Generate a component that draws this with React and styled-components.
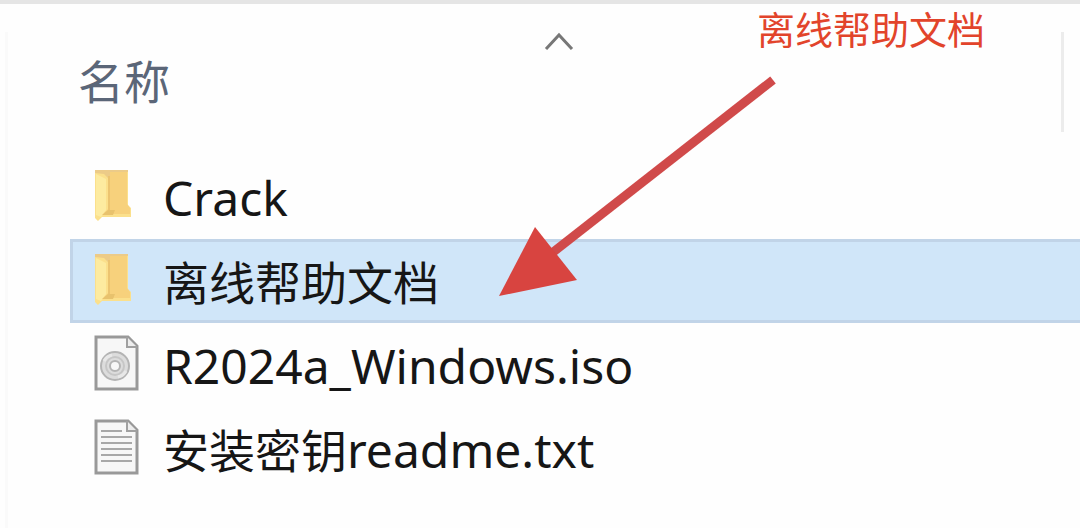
import React, { useState } from "react";
import styled, { createGlobalStyle } from "styled-components";

const GlobalStyle = createGlobalStyle`
  * {
    box-sizing: border-box;
  }
  body {
    margin: 0;
    background: #fefefe;
    font-family: "Noto Sans", "Noto Sans CJK SC", sans-serif;
  }
`;

const Window = styled.main`
  position: relative;
  min-height: 100vh;
  padding-top: 28px;
  border-top: 4px solid #e5e5e5;
  overflow: hidden;
`;

const Pane = styled.section`
  margin-left: 5px;
  min-height: calc(100vh - 32px);
  border-left: 3px solid #fafafa;
`;

const ColumnHeader = styled.div`
  display: flex;
  height: 100px;
  margin: 0 16px 0 48px;
  border-right: 3px solid #ececec;
`;

const SortButton = styled.button`
  flex: 1;
  display: flex;
  flex-direction: column;
  align-items: flex-start;
  padding: 0 0 0 22px;
  border: 0;
  background: none;
  color: #5b6678;
  font: inherit;
  font-size: 46px;
  line-height: 62px;
`;

const SortArrow = styled.svg`
  align-self: center;
  width: 30px;
  height: 18px;
  margin-right: 22px;
`;

const FileList = styled.ul`
  margin: 23px 0 0 62px;
  padding: 0;
  list-style: none;
`;

const FileRow = styled.button`
  display: flex;
  align-items: center;
  gap: 24px;
  width: 100%;
  height: 84px;
  padding: 0 20px 2px;
  border: 3px solid ${props => (props.$selected ? "#c1d4e8" : "transparent")};
  border-right: 0;
  background: ${props => (props.$selected ? "#d0e6f9" : "none")};
  color: #161616;
  font: inherit;
  font-size: 46px;
  line-height: 64px;
  text-align: left;
  white-space: nowrap;
`;

const FileName = styled.span`
  padding-top: 4px;
`;

const Latin = styled.span`
  font-size: 48px;
`;

const Icon = styled.svg`
  flex: none;
  width: 46px;
  height: 60px;
`;

const Note = styled.p`
  position: absolute;
  top: 0;
  left: 757px;
  margin: 0;
  color: #e2442b;
  font-family: "Noto Sans CJK SC", sans-serif;
  font-size: 38px;
  line-height: 48px;
  white-space: nowrap;
`;

const Pointer = styled.svg`
  position: absolute;
  top: 68px;
  left: 496px;
  width: 284px;
  height: 228px;
  pointer-events: none;
`;

const FolderIcon = () => (
  <Icon viewBox="0 0 46 60" aria-hidden="true">
    <path d="M2 4h33v35l3 3v9H9l-4 4-3-3z" fill="#fbe08c" />
    <path d="M15 6h19v32l3 4v6H10l6-6V14z" fill="#f7d17c" />
    <path d="M2 4h33v2H17v8l-6-6-9-1z" fill="#eccb88" />
    <path d="M16 10v36" stroke="#ecc470" strokeWidth="2" />
    <path d="M3 8l10 5v31l-5 7-5-2z" fill="#fdeba0" />
    <path d="M9 49l6-5h7l-2 5z" fill="#e8c26d" />
  </Icon>
);

const Sheet = () => (
  <>
    <path
      d="M3 3h32l9 9v43H3z"
      fill="#f7f7f7"
      stroke="#999"
      strokeWidth="3"
    />
    <path d="M34 3v10h10" fill="#ededed" stroke="#a0a0a0" strokeWidth="2" />
  </>
);

const DiscIcon = () => (
  <Icon viewBox="0 0 46 60" aria-hidden="true">
    <Sheet />
    <circle cx="22" cy="32" r="14" fill="#dcdcdc" stroke="#b4b4b4" strokeWidth="2" />
    <circle cx="22" cy="32" r="9" fill="none" stroke="#c6c6c6" strokeWidth="2" />
    <path
      d="M11 27a12 12 0 0 1 8-6M33 37a12 12 0 0 1-8 6"
      fill="none"
      stroke="#e8e8e8"
      strokeWidth="3"
    />
    <circle cx="22" cy="32" r="5" fill="#f8f8f8" stroke="#b4b4b4" strokeWidth="2" />
  </Icon>
);

const TextIcon = () => (
  <Icon viewBox="0 0 46 60" aria-hidden="true">
    <Sheet />
    <path
      d="M8 13h21M8 19h31M8 25h31M8 31h31M8 37h31M8 43h31"
      stroke="#a8a8a8"
      strokeWidth="2"
    />
  </Icon>
);

const files = [
  { latin: "Crack", icon: FolderIcon },
  { han: "离线帮助文档", icon: FolderIcon },
  { latin: "R2024a_Windows.iso", icon: DiscIcon },
  { han: "安装密钥", latin: "readme.txt", icon: TextIcon }
];

const App = () => {
  const [selected, setSelected] = useState(1);

  return (
    <Window lang="zh-CN">
      <GlobalStyle />
      <Pane>
        <ColumnHeader>
          <SortButton type="button">
            <SortArrow viewBox="0 0 30 18" aria-hidden="true">
              <path d="M2 17L15 3l13 14" fill="none" stroke="#777" strokeWidth="3" />
            </SortArrow>
            名称
          </SortButton>
        </ColumnHeader>
        <FileList>
          {files.map(({ han, latin, icon: FileIcon }, index) => (
            <li key={index}>
              <FileRow
                type="button"
                $selected={index === selected}
                onClick={() => setSelected(index)}
              >
                <FileIcon />
                <FileName>
                  {han}
                  {latin && <Latin>{latin}</Latin>}
                </FileName>
              </FileRow>
            </li>
          ))}
        </FileList>
      </Pane>
      <Pointer viewBox="0 0 284 228" aria-hidden="true">
        <path d="M277 8L56 181" stroke="#d04a4a" strokeWidth="9" />
        <path d="M3 224L39 155l42 53z" fill="#d84440" />
      </Pointer>
      <Note>离线帮助文档</Note>
    </Window>
  );
};

export default App;
